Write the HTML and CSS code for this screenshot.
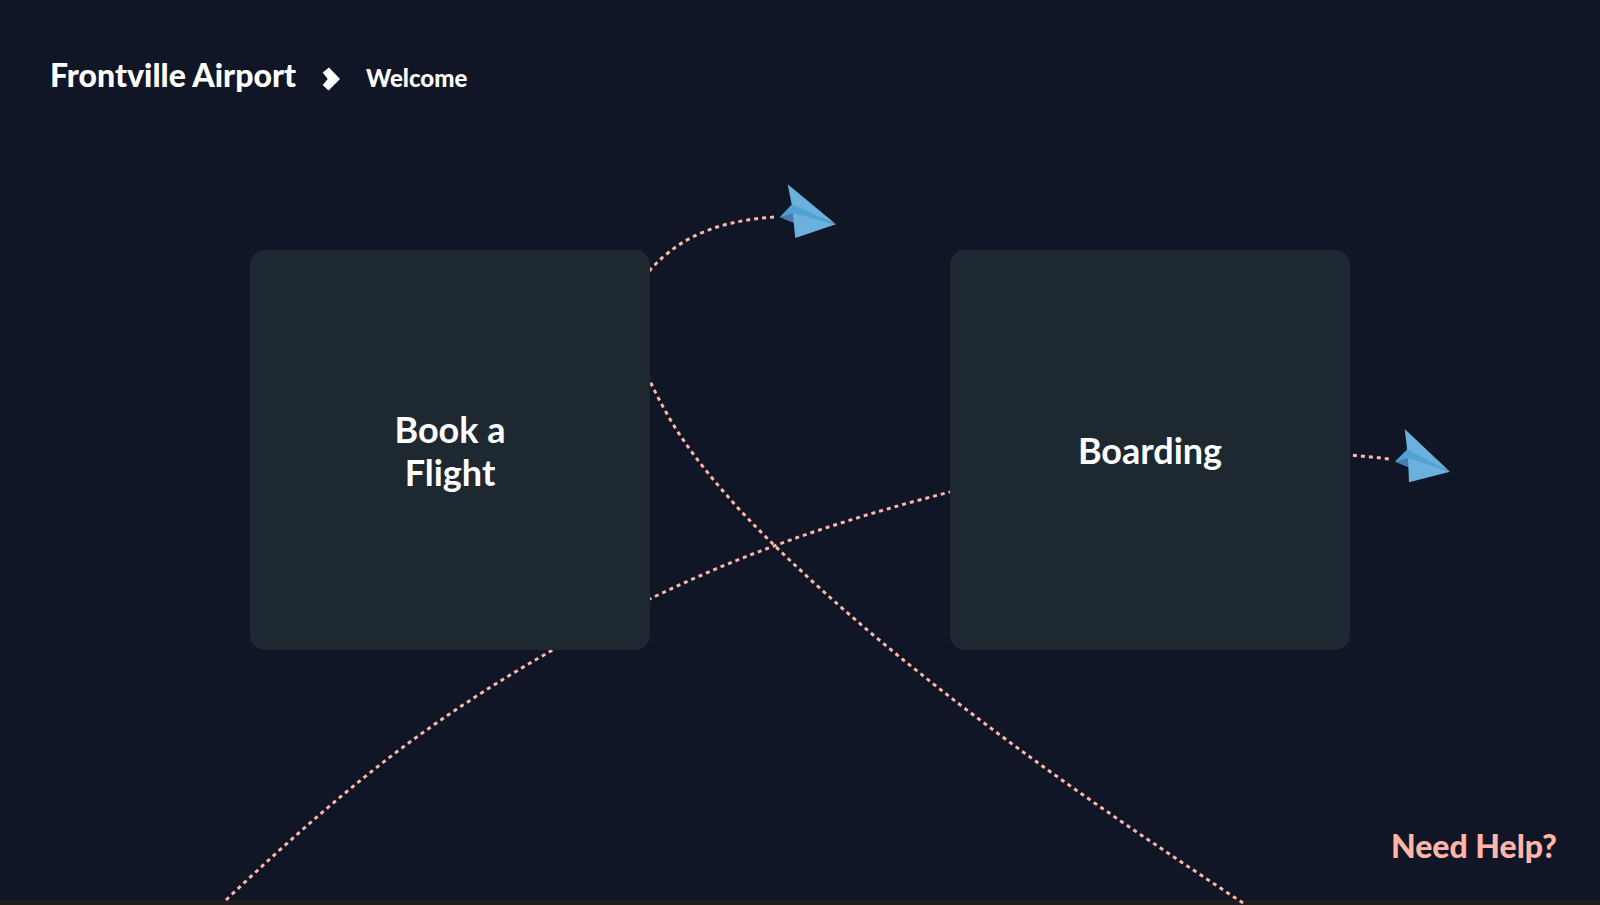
FILE: index.html
```html
<!DOCTYPE html>
<html lang="en">
<head>
<meta charset="utf-8">
<title>Frontville Airport</title>
<link rel="stylesheet" href="styles.css">
</head>
<body>
<div class="page">
  <svg class="routes" viewBox="0 0 1600 905" preserveAspectRatio="xMidYMin slice" aria-hidden="true">
    <path class="route" d="M226 900C290.7 838.5 355.3 781.2 420 734.7C497.8 678.8 575.5 635.1 653.3 597.3C751.3 549.7 849.3 517.7 947.3 492.7C1094.5 455.2 1242 441.4 1389 459"/>
    <path class="route" d="M1243 903C1192.1 869.3 1141.2 835.5 1090.3 800C1028.4 756.8 966.6 711.2 904.7 661C861.1 625.6 817.6 587.5 774 545C749.1 520.7 724.2 494.2 699.3 462C682.9 440.8 666.4 416.3 650 381C634 346 628 296 652.3 267.3C667.3 251.8 682.3 241.6 697.3 234.7C723.2 222.8 749.1 218.8 775 217"/>
    <g>
      <path class="wing" d="M787.7 184.3L836 224.3L792 206Z"/>
      <path class="fold" d="M779.7 217.3L792 204.3L836 224.3L793 215Z"/>
      <path class="keel" d="M779.7 217.3L793.5 213L794 222.9Z"/>
      <path class="wing" d="M792.7 213.3L836 224.3L795.3 238Z"/>
    </g>
    <g>
      <path class="wing" d="M1404.7 429L1450 471.7L1407.3 451Z"/>
      <path class="fold" d="M1394.7 461.7L1407.3 449.3L1450 471.7L1408.3 460Z"/>
      <path class="keel" d="M1394.7 461.7L1409 457.7L1409 467.5Z"/>
      <path class="wing" d="M1408 458L1450 471.7L1409 482.3Z"/>
    </g>
  </svg>
  <header class="header">
    <h1 class="brand">Frontville Airport</h1>
    <svg class="chevron" width="18" height="24" viewBox="0 0 18 24" aria-hidden="true"><path d="M7 0.5L18 12L6.5 23.5L0.7 18L5.7 12L0.7 5.5Z"/></svg>
    <h2 class="crumb">Welcome</h2>
  </header>
  <main class="choices">
    <button class="card" type="button"><span class="card-label">Book a Flight</span></button>
    <button class="card" type="button"><span class="card-label">Boarding</span></button>
  </main>
  <footer class="footer"><a class="help" href="#help">Need Help?</a></footer>
</div>
</body>
</html>
```
FILE: styles.css
```css
* { box-sizing: border-box; }

body {
  margin: 0;
  min-height: 100vh;
  background: #201e1e;
  font-family: Lato, "Open Sans", sans-serif;
  color: #fff;
}

.page {
  position: relative;
  display: grid;
  grid-template-rows: 1fr auto 1fr;
  min-height: calc(100vh - 5px);
  background: #101625;
}

.routes {
  position: absolute;
  top: 0;
  left: 0;
  width: 100%;
  height: calc(100% + 5px);
  pointer-events: none;
}

.route {
  fill: none;
  stroke: #ffb5a7;
  stroke-width: 3;
  stroke-dasharray: 4 4;
}

.wing { fill: #6cb1dd; }
.fold { fill: #4fa3d4; }
.keel { fill: #4a7ab0; }

.header,
.choices,
.footer { position: relative; }

.header {
  display: flex;
  align-items: baseline;
  align-self: start;
  gap: 26px;
  padding: 55px 50px 0;
}

.brand,
.crumb,
.help {
  margin: 0;
  font-family: "Lato Black", Lato, "Open Sans", sans-serif;
  font-weight: 900;
  line-height: 40px;
}

.brand { font-size: 32px; }
.crumb { font-size: 24px; }

.chevron { align-self: flex-end; margin-bottom: 7px; fill: #fff; }

.choices {
  display: flex;
  flex-wrap: wrap;
  justify-content: space-around;
  row-gap: 40px;
  padding: 0 100px;
}

.card {
  display: flex;
  align-items: center;
  justify-content: center;
  width: 400px;
  aspect-ratio: 1;
  padding: 1px 125px 0;
  border: 0;
  border-radius: 15px;
  background: #1e2831;
  color: #fff;
  font: 700 36px/43px Lato, "Open Sans", sans-serif;
  cursor: pointer;
}

.footer {
  display: flex;
  align-items: flex-end;
  justify-content: flex-end;
  padding: 0 43px 34px;
}

.help {
  color: #ffb5a7;
  font-size: 32px;
  text-decoration: none;
}
```
